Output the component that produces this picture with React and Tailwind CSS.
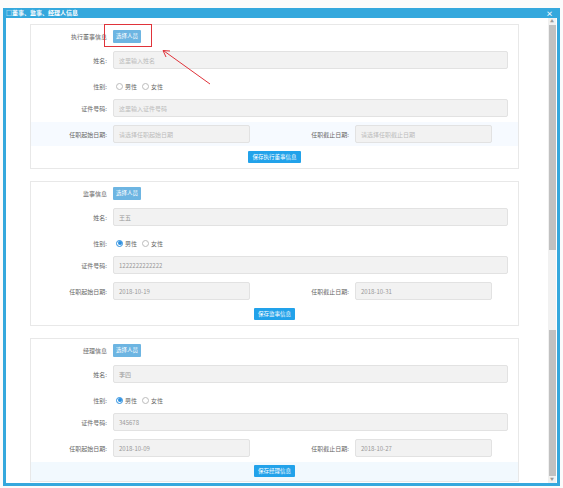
import React from "react";

const font = { fontFamily: '"Noto Sans CJK SC", "Noto Sans", sans-serif' };

function Label({ children, w = "w-[82px]" }) {
  return (
    <div className={`${w} shrink-0 text-right pr-[6px] text-[6px] text-[#666]`}>
      {children}
    </div>
  );
}

function Field({ value, placeholder, w = "w-[395px]" }) {
  return (
    <div
      className={`${w} h-[18px] flex items-center px-[5px] rounded-[2px] border border-[#e2e2e2] bg-[#f2f2f2] text-[6px] ${
        value ? "text-[#999]" : "text-[#bbb]"
      }`}
    >
      {value || placeholder}
    </div>
  );
}

function Radio({ checked, label }) {
  return (
    <div className="flex items-center gap-[2px]">
      <span
        className={`w-[7px] h-[7px] rounded-full border flex items-center justify-center ${
          checked ? "border-[#2b8fe0]" : "border-[#bbb] bg-white"
        }`}
      >
        {checked && <span className="w-[4px] h-[4px] rounded-full bg-[#2b8fe0]" />}
      </span>
      <span className="text-[6px] text-[#666]">{label}</span>
    </div>
  );
}

function Section({ title, data, saveText, bandDate, bandSave, className = "" }) {
  return (
    <div className={`w-[489px] border border-[#e8e8e8] bg-white flex flex-col ${className}`}>
      <div className="flex items-center h-[13px] mt-[5px]">
        <Label>{title}</Label>
        <div className="h-[13px] w-[28px] flex items-center justify-center bg-[#6db5e2] text-white text-[5.5px] rounded-[1px]">
          选择人员
        </div>
      </div>
      <div className="flex items-center mt-[8px]">
        <Label>姓名:</Label>
        <Field value={data.name} placeholder="这里输入姓名" />
      </div>
      <div className="flex items-center h-[18px] mt-[8px]">
        <Label>性别:</Label>
        <div className="flex items-center gap-[5px] pl-[3px]">
          <Radio checked={data.male} label="男性" />
          <Radio label="女性" />
        </div>
      </div>
      <div className="flex items-center mt-[4px]">
        <Label>证件号码:</Label>
        <Field value={data.id} placeholder="这里输入证件号码" />
      </div>
      <div className={`flex items-center mt-[5px] py-[3px] ${bandDate ? "bg-[#f6faff]" : ""}`}>
        <Label>任职起始日期:</Label>
        <Field w="w-[137px]" value={data.start} placeholder="请选择任职起始日期" />
        <Label w="w-[105px]">任职截止日期:</Label>
        <Field w="w-[137px]" value={data.end} placeholder="请选择任职截止日期" />
      </div>
      <div className={`flex justify-center mt-[2px] py-[3px] ${bandSave ? "bg-[#f2f9fe] pb-[4px]" : "pb-[5px]"}`}>
        <div className="h-[12px] px-[4px] flex items-center bg-[#22a2ea] text-white text-[5.5px] rounded-[1px]">
          {saveText}
        </div>
      </div>
    </div>
  );
}

export default function App() {
  return (
    <div className="w-[563px] h-[488px] bg-[#fbfbfb] pt-[8px] pl-[3px] relative overflow-hidden" style={font}>
      <div className="w-[557px] h-[478px] bg-[#35a8dd] flex flex-col">
        <div className="h-[11px] flex items-center justify-between px-[3px] text-white">
          <span className="text-[6px] font-bold leading-none">□董事、监事、经理人信息</span>
          <span className="text-[7px] font-bold leading-none mr-[4px]">×</span>
        </div>
        <div className="flex-1 mx-[3px] mb-[3px] bg-white flex">
          <div className="flex-1 flex flex-col pl-[24px] pt-[6px]">
            <Section
              title="执行董事信息"
              data={{}}
              saveText="保存执行董事信息"
              bandDate
            />
            <Section
              className="mt-[12px]"
              title="监事信息"
              data={{ name: "王五", male: true, id: "1222222222222", start: "2018-10-19", end: "2018-10-31" }}
              saveText="保存监事信息"
            />
            <Section
              className="mt-[12px]"
              title="经理信息"
              data={{ name: "李四", male: true, id: "345678", start: "2018-10-09", end: "2018-10-27" }}
              saveText="保存经理信息"
              bandSave
            />
          </div>
          <div className="w-[8px] mr-[1px] bg-[#f1f1f1] flex flex-col items-center">
            <span className="text-[4px] text-[#999] leading-[7px]">▲</span>
            <div className="w-[7px] h-[225px] bg-[#c1c1c1]" />
            <div className="h-[80px]" />
            <div className="w-[7px] h-[146px] bg-[#c1c1c1]" />
            <span className="text-[4px] text-[#999] leading-[7px]">▼</span>
          </div>
        </div>
      </div>
      <div className="absolute left-[104px] top-[24px] w-[48px] h-[23px] border-[1.5px] border-[#e0333a]" />
      <svg className="absolute left-0 top-0" width="563" height="488">
        <line x1="210" y1="84" x2="164" y2="51" stroke="#e0333a" strokeWidth="1" />
        <polyline points="166,57 163,50.5 170,51" fill="none" stroke="#e0333a" strokeWidth="1" />
      </svg>
    </div>
  );
}
